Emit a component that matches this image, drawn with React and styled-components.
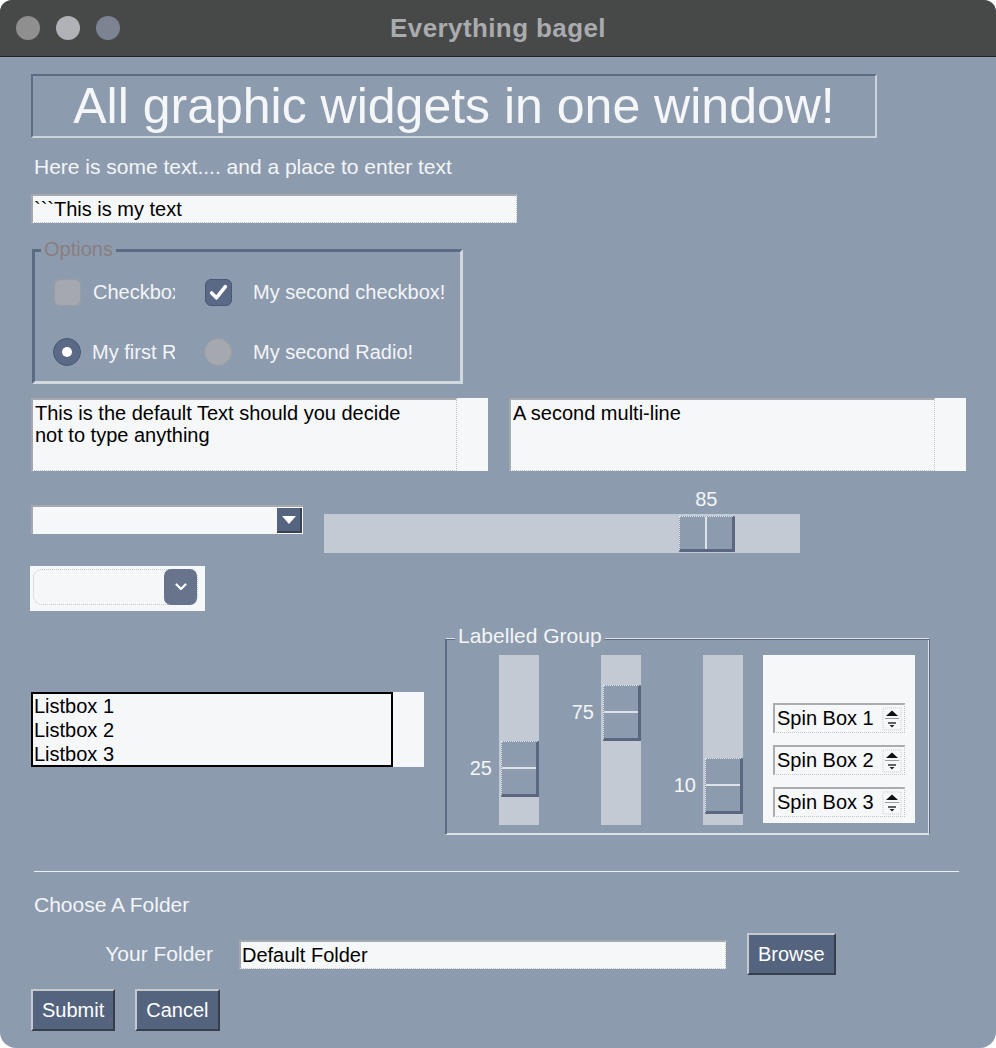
import React from 'react';
import styled, { createGlobalStyle } from 'styled-components';

const GlobalStyle = createGlobalStyle`
  html, body { margin: 0; padding: 0; background: #ffffff; }
  body { font-family: "Liberation Sans", Arial, sans-serif; }
  * { box-sizing: border-box; }
`;

const BG = '#8d9bae';
const FIELD = '#f5f7f9';

const Window = styled.div`
  width: 996px;
  height: 1048px;
  background: ${BG};
  border-radius: 12px 12px 16px 16px;
  overflow: hidden;
  display: flex;
  flex-direction: column;
`;

const TitleBar = styled.div`
  height: 57px;
  flex: none;
  background: #474948;
  border-bottom: 1px solid #232424;
  display: grid;
  grid-template-columns: 1fr auto 1fr;
  align-items: center;
  padding: 0 16px;
`;

const Lights = styled.div`
  display: flex;
  gap: 16px;
`;

const Light = styled.span`
  width: 24px;
  height: 24px;
  border-radius: 50%;
  background: ${p => p.$color};
`;

const Title = styled.div`
  font-weight: bold;
  font-size: 26px;
  letter-spacing: 0.4px;
  color: #a9abae;
`;

const Content = styled.div`
  padding-left: 31px;
  display: flex;
  flex-direction: column;
  align-items: flex-start;
`;

const Heading = styled.div`
  margin-top: 17px;
  width: 846px;
  height: 64px;
  border: 2px solid;
  border-color: #5d6c85 #ccd3dc #ccd3dc #5d6c85;
  display: flex;
  align-items: center;
  justify-content: center;
  font-size: 50px;
  line-height: 1;
  color: #f5f6f8;
`;

const Caption = styled.div`
  margin-top: ${p => p.$top || 0}px;
  margin-left: 3px;
  font-size: 21px;
  line-height: 24px;
  color: #f3f5f7;
`;

const Entry = styled.div`
  margin-top: ${p => p.$top || 0}px;
  width: ${p => p.$w}px;
  height: 29px;
  background: ${FIELD};
  border-top: 2px solid #a5a8ac;
  border-left: 2px solid #a5a8ac;
  border-bottom: 1px dotted #c4c8cd;
  border-right: 1px dotted #c4c8cd;
  padding-left: 1px;
  font-size: 20px;
  line-height: 26px;
  color: #000;
  white-space: nowrap;
`;

const Frame = styled.div`
  position: relative;
  margin-top: 26px;
  margin-left: 1px;
  width: 431px;
  height: 135px;
  border: 3px solid;
  border-color: #5b6b84 #d2d8e0 #d2d8e0 #5b6b84;
  padding: 11px 0 0 18px;
  display: grid;
  grid-template-columns: 151px auto;
  grid-template-rows: 58px 58px;
  row-gap: 2px;
`;

const Legend = styled.span`
  position: absolute;
  top: -14px;
  left: ${p => p.$left}px;
  padding: 0 3px;
  background: ${BG};
  font-size: ${p => p.$size || 20}px;
  line-height: 22px;
  color: ${p => p.$color};
`;

const Option = styled.div`
  display: flex;
  align-items: center;
`;

const Indicator = styled.span`
  width: 28px;
  flex: none;
  display: flex;
  justify-content: center;
  margin-right: ${p => p.$gap}px;
`;

const CheckBox = styled.span`
  width: 27px;
  height: 27px;
  border-radius: 6px;
  display: flex;
  align-items: center;
  justify-content: center;
  background: ${p => (p.$on ? '#5a6985' : '#a5a9af')};
  border: 1px solid ${p => (p.$on ? '#4b5873' : '#9a9ea4')};
`;

const RadioDot = styled.span`
  width: 28px;
  height: 28px;
  border-radius: 50%;
  display: flex;
  align-items: center;
  justify-content: center;
  background: ${p => (p.$on ? '#5a6985' : '#a5a9af')};
  border: 1px solid ${p => (p.$on ? '#4b5873' : '#9a9ea4')};
  &::after {
    content: '';
    display: ${p => (p.$on ? 'block' : 'none')};
    width: 10px;
    height: 10px;
    border-radius: 50%;
    background: #ffffff;
  }
`;

const OptionText = styled.span`
  font-size: 20px;
  color: #f3f5f7;
  white-space: nowrap;
  overflow: hidden;
  max-width: ${p => (p.$clip ? `${p.$clip}px` : 'none')};
`;

const Row = styled.div`
  margin-top: ${p => p.$top || 0}px;
  display: flex;
  align-items: flex-start;
  gap: ${p => p.$gap || 21}px;
`;

const TextBox = styled.div`
  width: 457px;
  height: 73px;
  display: flex;
`;

const TextBody = styled.div`
  flex: 1;
  background: ${FIELD};
  border-top: 2px solid #a5a8ac;
  border-left: 2px solid #a5a8ac;
  border-bottom: 1px dotted #c4c8cd;
  border-right: 1px dotted #c4c8cd;
  padding: 2px 0 0 2px;
  font-size: 20px;
  line-height: 22px;
  color: #000;
  white-space: pre-line;
`;

const ScrollStrip = styled.div`
  width: 31px;
  flex: none;
  background: ${FIELD};
`;

const Combo = styled.div`
  margin-top: 16px;
  width: 272px;
  height: 29px;
  background: ${FIELD};
  border-top: 2px solid #a5a8ac;
  border-left: 2px solid #a5a8ac;
  display: flex;
  justify-content: flex-end;
  align-items: flex-start;
  padding: 1px 1px 0 0;
`;

const ComboArrow = styled.span`
  width: 25px;
  height: 25px;
  background: #56657f;
  border-right: 2px solid #3a4150;
  border-bottom: 2px solid #3a4150;
  display: flex;
  align-items: center;
  justify-content: center;
`;

const HSlider = styled.div`
  padding-top: 25px;
`;

const HTrough = styled.div`
  position: relative;
  width: 476px;
  height: 39px;
  background: #c3cad3;
`;

const HThumb = styled.div`
  position: absolute;
  top: 2px;
  width: 56px;
  height: 36px;
  background: ${BG};
  border-top: 1px dotted #e3e7ec;
  border-left: 1px dotted #e3e7ec;
  border-right: 3px solid #5b6781;
  border-bottom: 3px solid #5b6781;
  &::before {
    content: '';
    position: absolute;
    left: 25px;
    top: 0;
    bottom: 0;
    width: 2px;
    background: #dde2e8;
  }
`;

const ValueLabel = styled.span`
  position: absolute;
  font-size: 20px;
  line-height: 20px;
  color: #f3f5f7;
  white-space: nowrap;
  ${p =>
    p.$vertical
      ? 'right: calc(100% + 10px); top: 50%; transform: translateY(-50%);'
      : 'bottom: calc(100% + 8px); left: 50%; transform: translateX(-50%);'}
`;

const FancyCombo = styled.div`
  margin-top: 13px;
  margin-left: -1px;
  width: 175px;
  height: 45px;
  background: ${FIELD};
  padding: 3px 7px 6px 3px;
`;

const FancyInner = styled.div`
  height: 100%;
  border: 1px dotted #c3c8cf;
  border-radius: 9px;
  display: flex;
  justify-content: flex-end;
  align-items: center;
`;

const FancyButton = styled.span`
  width: 33px;
  height: 36px;
  border-radius: 7px;
  background: #67748c;
  display: flex;
  align-items: center;
  justify-content: center;
`;

const ListRow = styled.div`
  margin-top: 27px;
  display: flex;
  align-items: flex-start;
  gap: 21px;
`;

const ListBox = styled.div`
  margin-top: 54px;
  display: flex;
  height: 75px;
`;

const ListBody = styled.div`
  width: 362px;
  background: ${FIELD};
  border: 2px solid #000000;
  padding-left: 1px;
  font-size: 20px;
  line-height: 24px;
  color: #000;
`;

const Group = styled.div`
  position: relative;
  width: 485px;
  height: 197px;
  border: 1px solid;
  border-color: #dbe0e6 #5d6c84 #dbe0e6 #5d6c84;
  box-shadow: inset 1px 1px 0 #5d6c84, inset -1px -1px 0 #dbe0e6;
  padding: 16px 0 0 11px;
  display: flex;
  align-items: flex-start;
  gap: 20px;
`;

const VSlider = styled.div`
  width: 82px;
  height: 170px;
  display: flex;
  justify-content: flex-end;
`;

const VTrough = styled.div`
  position: relative;
  width: 40px;
  height: 170px;
  background: #c3cad3;
`;

const VThumb = styled.div`
  position: absolute;
  left: 2px;
  width: 38px;
  height: 56px;
  background: ${BG};
  border-top: 1px dotted #e3e7ec;
  border-left: 1px dotted #e3e7ec;
  border-right: 3px solid #5b6781;
  border-bottom: 3px solid #5b6781;
  &::before {
    content: '';
    position: absolute;
    top: 25px;
    left: 0;
    right: 0;
    height: 2px;
    background: #dde2e8;
  }
`;

const SpinPanel = styled.div`
  width: 152px;
  height: 168px;
  background: ${FIELD};
  padding: 48px 10px 0;
  display: flex;
  flex-direction: column;
  gap: 12px;
`;

const Spin = styled.div`
  width: 132px;
  height: 30px;
  border-top: 2px solid #a9acb0;
  border-left: 2px solid #a9acb0;
  border-bottom: 1px dotted #c4c8cd;
  border-right: 1px dotted #c4c8cd;
  display: flex;
  align-items: center;
  justify-content: space-between;
  padding: 0 2px 0 2px;
  font-size: 20px;
  color: #000;
`;

const Separator = styled.div`
  margin-top: 36px;
  margin-left: 3px;
  width: 925px;
  height: 1px;
  background: #eceef2;
`;

const FolderRow = styled.div`
  margin-top: 16px;
  display: flex;
  align-items: center;
`;

const FolderLabel = styled.div`
  width: 182px;
  margin-right: 26px;
  text-align: right;
  font-size: 21px;
  color: #f3f5f7;
`;

const Button = styled.button`
  height: 42px;
  padding: 0 9px;
  margin-left: ${p => p.$left || 0}px;
  background: #54637e;
  color: #ffffff;
  font-family: "Liberation Sans", Arial, sans-serif;
  font-size: 20px;
  border: 2px solid;
  border-color: #c5c9cf #363d4b #363d4b #c5c9cf;
  cursor: pointer;
`;

const ButtonRow = styled.div`
  margin-top: 14px;
  display: flex;
  gap: 20px;
`;

const CheckMark = () => (
  <svg width="19" height="17" viewBox="0 0 18 16">
    <polyline points="2.5,8.5 7,13 15.5,2.5" fill="none" stroke="#ffffff" strokeWidth="3.4" strokeLinecap="round" strokeLinejoin="round" />
  </svg>
);

const SpinArrows = () => (
  <svg width="20" height="24" viewBox="0 0 20 24">
    <rect x="1" y="1" width="18" height="22" fill="none" stroke="#c9ccd1" strokeWidth="1" strokeDasharray="1 1" />
    <path d="M4 9 L10 3.5 L16 9 Z" fill="#111" />
    <line x1="3" y1="11.5" x2="17" y2="11.5" stroke="#9a9ea4" strokeWidth="1" />
    <line x1="6" y1="16" x2="14" y2="16" stroke="#222" strokeWidth="1.4" />
    <path d="M7.5 18 L12.5 18 L10 20.5 Z" fill="#222" />
  </svg>
);

const Option_ = ({ kind, on, label, gap, clip }) => (
  <Option>
    <Indicator $gap={gap}>
      {kind === 'check' ? (
        <CheckBox $on={on}>{on && <CheckMark />}</CheckBox>
      ) : (
        <RadioDot $on={on} />
      )}
    </Indicator>
    <OptionText $clip={clip}>{label}</OptionText>
  </Option>
);

const Vertical = ({ value }) => (
  <VSlider>
    <VTrough>
      <VThumb style={{ top: 2 + (100 - value) * 1.12 }}>
        <ValueLabel $vertical>{value}</ValueLabel>
      </VThumb>
    </VTrough>
  </VSlider>
);

export default function App() {
  const hValue = 85;
  return (
    <>
      <GlobalStyle />
      <Window>
        <TitleBar>
          <Lights>
            <Light $color="#8f8f90" />
            <Light $color="#b0b2b5" />
            <Light $color="#7c8493" />
          </Lights>
          <Title>Everything bagel</Title>
          <div />
        </TitleBar>

        <Content>
          <Heading>All graphic widgets in one window!</Heading>
          <Caption $top={17}>Here is some text.... and a place to enter text</Caption>
          <Entry $top={15} $w={486}>```This is my text</Entry>

          <Frame>
            <Legend $left={6} $color="#8a7e80">Options</Legend>
            <Option_ kind="check" label="Checkbox 1" gap={12} clip={82} />
            <Option_ kind="check" on label="My second checkbox!" gap={21} />
            <Option_ kind="radio" on label="My first Radio!" gap={11} clip={83} />
            <Option_ kind="radio" label="My second Radio!" gap={21} />
          </Frame>

          <Row $top={14}>
            <TextBox>
              <TextBody>{'This is the default Text should you decide\nnot to type anything'}</TextBody>
              <ScrollStrip />
            </TextBox>
            <TextBox>
              <TextBody>A second multi-line</TextBody>
              <ScrollStrip />
            </TextBox>
          </Row>

          <Row $top={18}>
            <Combo>
              <ComboArrow>
                <svg width="14" height="8" viewBox="0 0 14 8">
                  <path d="M0 0 L14 0 L7 8 Z" fill="#ffffff" />
                </svg>
              </ComboArrow>
            </Combo>
            <HSlider>
              <HTrough>
                <HThumb style={{ left: ((476 - 56 - 2) * hValue) / 100 }}>
                  <ValueLabel>{hValue}</ValueLabel>
                </HThumb>
              </HTrough>
            </HSlider>
          </Row>

          <FancyCombo>
            <FancyInner>
              <FancyButton>
                <svg width="12" height="8" viewBox="0 0 12 8">
                  <polyline points="1.5,1.5 6,6 10.5,1.5" fill="none" stroke="#ffffff" strokeWidth="2.2" strokeLinecap="round" strokeLinejoin="round" />
                </svg>
              </FancyButton>
            </FancyInner>
          </FancyCombo>

          <ListRow>
            <ListBox>
              <ListBody>
                <div>Listbox 1</div>
                <div>Listbox 2</div>
                <div>Listbox 3</div>
              </ListBody>
              <ScrollStrip />
            </ListBox>
            <Group>
              <Legend $left={9} $size={21} $color="#f3f5f7">Labelled Group</Legend>
              <Vertical value={25} />
              <Vertical value={75} />
              <Vertical value={10} />
              <SpinPanel>
                {['Spin Box 1', 'Spin Box 2', 'Spin Box 3'].map(s => (
                  <Spin key={s}>
                    <span>{s}</span>
                    <SpinArrows />
                  </Spin>
                ))}
              </SpinPanel>
            </Group>
          </ListRow>

          <Separator />
          <Caption $top={21}>Choose A Folder</Caption>
          <FolderRow>
            <FolderLabel>Your Folder</FolderLabel>
            <Entry $w={487}>Default Folder</Entry>
            <Button $left={21}>Browse</Button>
          </FolderRow>
          <ButtonRow>
            <Button>Submit</Button>
            <Button>Cancel</Button>
          </ButtonRow>
        </Content>
      </Window>
    </>
  );
}
